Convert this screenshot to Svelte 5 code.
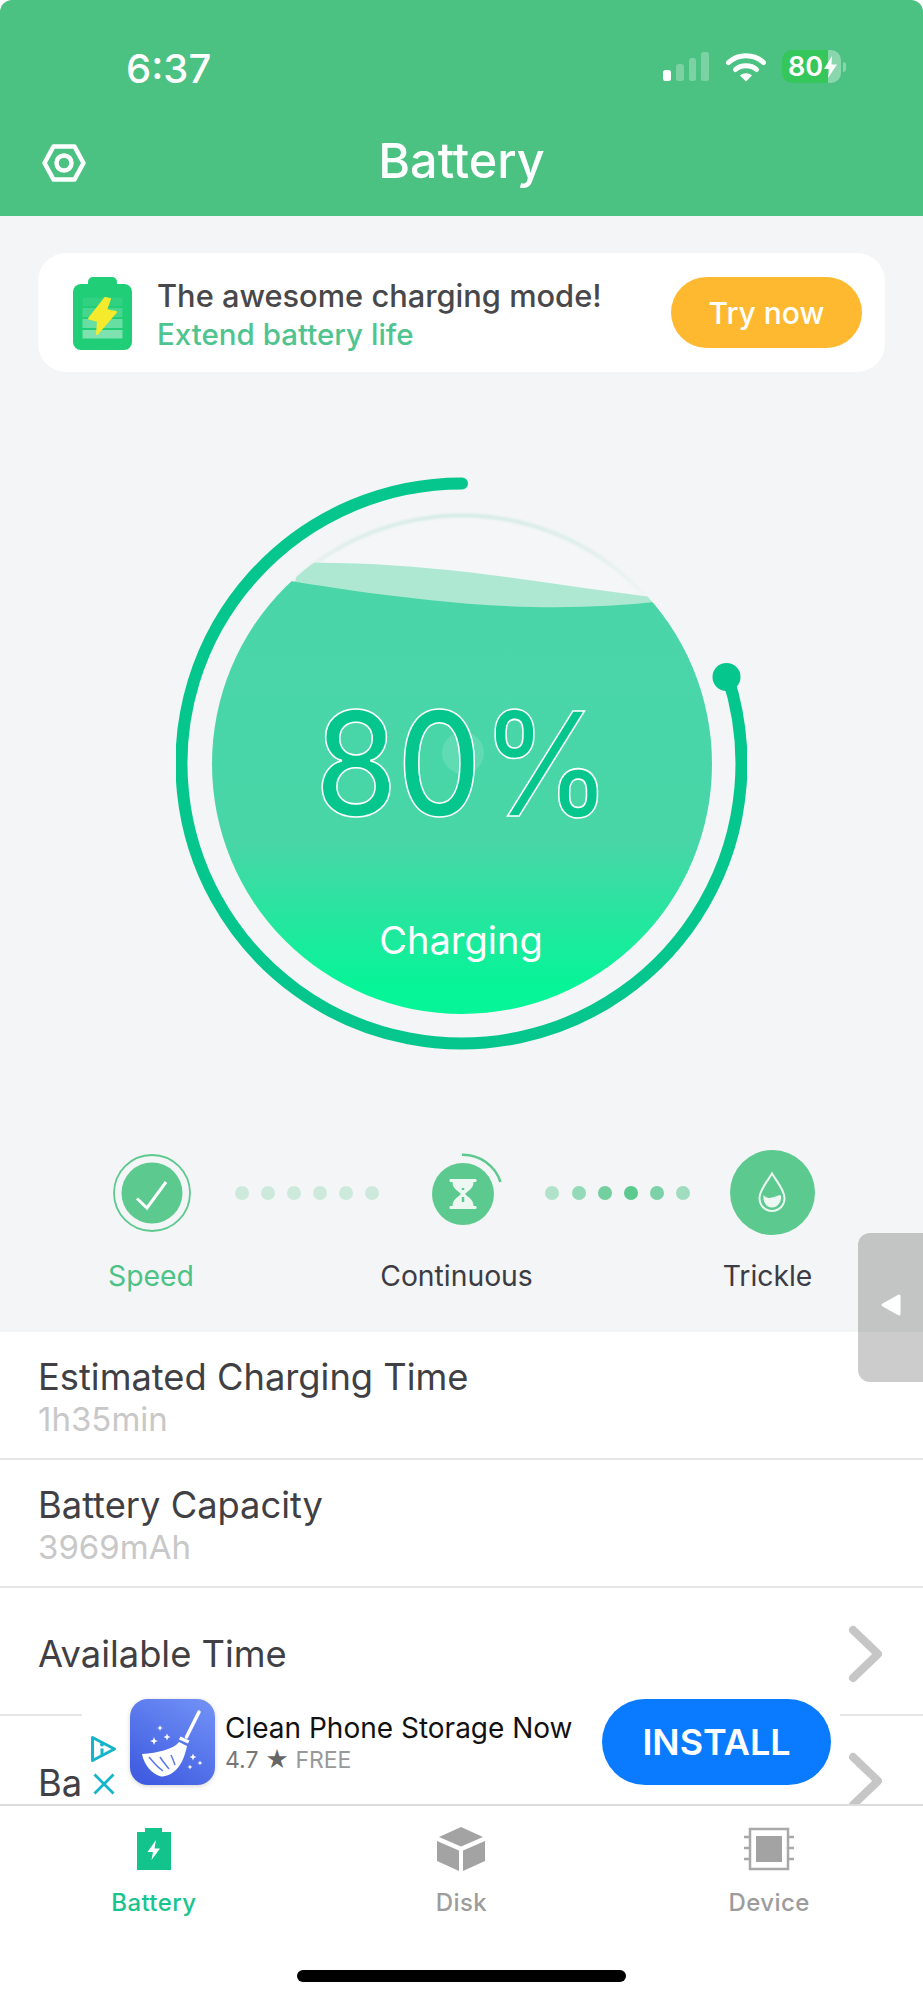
<script>
  const firstDots = [0, 1, 2, 3, 4, 5];
  const secondDots = ['#b0e2c9', '#94d9b8', '#74cf9f', '#5cc98f', '#7cd1a7', '#a0dcc0'];
  const stars = [
    [30, 29, 3], [24, 42, 4], [37, 38, 3.5], [63, 58, 3.5], [70, 64, 2.5], [60, 68, 2.5]
  ];
  const star = (x, y, r) =>
    `M${x} ${y - r}L${x + r * 0.28} ${y - r * 0.28}L${x + r} ${y}L${x + r * 0.28} ${y + r * 0.28}L${x} ${y + r}L${x - r * 0.28} ${y + r * 0.28}L${x - r} ${y}L${x - r * 0.28} ${y - r * 0.28}Z`;
</script>

<div class="page">
  <header class="header">
    <div class="status">
      <span class="time">6:37</span>
      <div class="status-icons">
        <div class="signal">
          <i class="b1"></i><i class="b2"></i><i class="b3"></i><i class="b4"></i>
        </div>
        <svg class="wifi" viewBox="0 0 40 30" width="40" height="30">
          <path d="M2.500 10.500C12 1.500 28 1.500 37.500 10.500" fill="none" stroke="#fff" stroke-width="5" stroke-linecap="round"/>
          <path d="M9.500 17.500C15 12.500 25 12.500 30.500 17.500" fill="none" stroke="#fff" stroke-width="5" stroke-linecap="round"/>
          <path d="M14 23.500C17.500 20.500 22.500 20.500 26 23.500L20 29.500Z" fill="#fff"/>
        </svg>
        <div class="batt">
          <div class="batt-body">
            <span>80</span>
            <svg viewBox="0 0 13 22" width="13" height="22"><path d="M8 0L0 13H5.500L4 22L13 8.500H7.500Z" fill="#fff"/></svg>
          </div>
          <i class="batt-nub"></i>
        </div>
      </div>
    </div>
    <div class="nav">
      <svg class="gear" viewBox="0 0 44 38" width="44" height="38">
        <path d="M11.500 2.500H32.500L41.500 19L32.500 35.500H11.500L2.500 19Z" fill="none" stroke="#fff" stroke-width="4.500" stroke-linejoin="round"/>
        <circle cx="22" cy="19" r="7.500" fill="none" stroke="#fff" stroke-width="4.500"/>
      </svg>
      <h1>Battery</h1>
    </div>
  </header>

  <main class="hero">
    <section class="promo">
      <svg class="promo-icon" viewBox="73 276 59 73" width="59" height="73">
        <path d="M88 284V281a5 5 0 0 1 5-5h19a5 5 0 0 1 5 5v3Z" fill="#1fce76"/>
        <rect x="73" y="283" width="59" height="66" rx="8" fill="#1fce76"/>
        <rect x="82.500" y="296.500" width="40" height="8.500" fill="#fff" opacity=".08"/>
        <rect x="82.500" y="307" width="40" height="9" fill="#fff" opacity=".18"/>
        <rect x="82.500" y="318" width="40" height="9" fill="#fff" opacity=".32"/>
        <rect x="82.500" y="329" width="40" height="8.500" fill="#fff" opacity=".42"/>
        <path d="M105 297L89 317.500L98 320L97 333L116 311L106 309L110 298Z" fill="#f6ea2c" stroke="#f6ea2c" stroke-width="2" stroke-linejoin="round"/>
      </svg>
      <div class="promo-text">
        <div class="promo-title">The awesome charging mode!</div>
        <div class="promo-sub">Extend battery life</div>
      </div>
      <button class="try">Try now</button>
    </section>

    <svg class="gauge" viewBox="176 477 571 573" width="571" height="573">
      <defs>
        <linearGradient id="water" gradientUnits="userSpaceOnUse" x1="0" y1="514" x2="0" y2="1014">
          <stop offset="0" stop-color="#4bd5a8"/>
          <stop offset=".66" stop-color="#48d6a7"/>
          <stop offset=".95" stop-color="#05f598"/>
          <stop offset="1" stop-color="#05f598"/>
        </linearGradient>
        <linearGradient id="rim" gradientUnits="userSpaceOnUse" x1="0" y1="514" x2="0" y2="600">
          <stop offset="0" stop-color="#d6ece5"/>
          <stop offset="1" stop-color="#f1f5f5"/>
        </linearGradient>
        <filter id="soft" x="-5%" y="-5%" width="110%" height="110%"><feGaussianBlur stdDeviation="1.200"/></filter>
        <clipPath id="disc"><circle cx="462" cy="764" r="250"/></clipPath>
      </defs>
      <circle cx="462" cy="764" r="248.500" fill="#f4f6f7" stroke="url(#rim)" stroke-width="4" filter="url(#soft)"/>
      <g clip-path="url(#disc)">
        <path d="M300 563C360 562 410 566 471 572.500C540 581 600 591 660 598V640H280Z" fill="#aee8d3"/>
        <path d="M280 579C330 588 400 598 471 604C540 609 600 608 660 601.500C680 600 700 598 720 594V1020H200V579Z" fill="url(#water)"/>
      </g>
      <path d="M462 483.500A280 280 0 1 0 727.600 676.500" fill="none" stroke="#05c68c" stroke-width="12" stroke-linecap="round"/>
      <circle cx="726.500" cy="677" r="14" fill="#05c68c"/>
      <circle cx="463" cy="753" r="21" fill="#fff" opacity=".13"/>
      <text class="pct" transform="translate(463 816) scale(.9 1)">80%</text>
      <text class="chg" x="461" y="954">Charging</text>
    </svg>

    <div class="steps">
      <div class="step speed">
        <svg viewBox="0 0 78 78" width="78" height="78">
          <circle cx="39" cy="39" r="38" fill="none" stroke="#5cc98f" stroke-width="1.800"/>
          <circle cx="39" cy="39" r="30.500" fill="#5cc98f"/>
          <path d="M24 44.500L34 54L53 28" fill="none" stroke="#fff" stroke-width="3"/>
        </svg>
      </div>
      <div class="dots d1">
        {#each firstDots as d (d)}<i></i>{/each}
      </div>
      <div class="step cont">
        <svg viewBox="421.5 1150 82 82" width="82" height="82">
          <circle cx="461.500" cy="1192" r="31" fill="#5cc98f"/>
          <path d="M460.500 1152.700A39.500 39.500 0 0 1 499 1180" fill="none" stroke="#5cc98f" stroke-width="2.500"/>
          <rect x="448" y="1177" width="27" height="3" rx="1" fill="#eef8f3"/>
          <rect x="448" y="1204" width="27" height="3" rx="1" fill="#eef8f3"/>
          <path d="M451 1180H472C472 1187 466 1189 463.500 1192C466 1195 472 1197 472 1204H451C451 1197 457 1195 459.500 1192C457 1189 451 1187 451 1180Z" fill="#eef8f3"/>
          <path d="M461.500 1186V1188M461.500 1195V1200" stroke="#5cc98f" stroke-width="2.500"/>
        </svg>
      </div>
      <div class="dots d2">
        {#each secondDots as c (c)}<i style="background:{c}"></i>{/each}
      </div>
      <div class="step trickle">
        <svg viewBox="729 1150 85 85" width="85" height="85">
          <circle cx="771.500" cy="1192.500" r="42.500" fill="#5cc98f"/>
          <path d="M771 1173.500C776 1182 783.500 1190 783.500 1198C783.500 1205.500 778 1211 771 1211C764 1211 758.500 1205.500 758.500 1198C758.500 1190 766 1182 771 1173.500Z" fill="none" stroke="#eef8f3" stroke-width="2"/>
          <path d="M762.500 1195C766 1199 770 1198 773 1197C776 1196 778 1194.500 780 1195.500C781 1201 777 1207.500 771 1207.500C765 1207.500 761.500 1201 762.500 1195Z" fill="#eef8f3"/>
        </svg>
      </div>
    </div>

    <div class="labels">
      <span class="l-speed">Speed</span>
      <span class="l-cont">Continuous</span>
      <span class="l-trickle">Trickle</span>
    </div>
  </main>

  <section class="list">
    <div class="row two">
      <div class="row-title">Estimated Charging Time</div>
      <div class="row-sub">1h35min</div>
    </div>
    <div class="row two">
      <div class="row-title">Battery Capacity</div>
      <div class="row-sub">3969mAh</div>
    </div>
    <div class="row one">
      <div class="row-title">Available Time</div>
      <svg class="chev" viewBox="0 0 36 58" width="36" height="58"><path d="M5 5L30 29L5 53" fill="none" stroke="#c6c6c6" stroke-width="8" stroke-linecap="round" stroke-linejoin="round"/></svg>
    </div>
    <div class="row last">
      <div class="row-title">Ba</div>
      <svg class="chev chev2" viewBox="0 0 36 58" width="36" height="58"><path d="M5 5L30 29L5 53" fill="none" stroke="#c6c6c6" stroke-width="8" stroke-linecap="round" stroke-linejoin="round"/></svg>
    </div>
  </section>

  <nav class="tabs">
    <div class="tab active">
      <svg viewBox="0 0 36 44" width="36" height="44">
        <path d="M9 1h17v4h9v38H1V5h8Z" fill="#12c48c"/>
        <path d="M20 13L11.500 25H17L15.500 33L24 21.500H18.500Z" fill="#fff"/>
      </svg>
      <span>Battery</span>
    </div>
    <div class="tab">
      <svg viewBox="0 0 48 44" width="48" height="44">
        <path d="M24 0L46 10L24 19.500L2 10Z" fill="#a3a3a3"/>
        <path d="M0 14L22 23.500V44L0 34Z" fill="#a3a3a3"/>
        <path d="M48 14L26 23.500V44L48 34Z" fill="#a3a3a3"/>
      </svg>
      <span>Disk</span>
    </div>
    <div class="tab">
      <svg viewBox="0 0 50 44" width="50" height="44">
        <rect x="6" y="2" width="38" height="40" fill="none" stroke="#a9a9a9" stroke-width="2.500"/>
        <rect x="12" y="8" width="26" height="26" transform="translate(0 1)" fill="#a3a3a3"/>
        <path d="M0 10H5M0 21H5M0 32H5M45 10H50M45 21H50M45 32H50" stroke="#a9a9a9" stroke-width="2.500"/>
      </svg>
      <span>Device</span>
    </div>
  </nav>

  <div class="home-wrap"><div class="home"></div></div>

  <aside class="side-tab">
    <svg viewBox="0 0 22 24" width="22" height="24"><path d="M19 3L3 12L19 21Z" fill="#fff" stroke="#fff" stroke-width="3" stroke-linejoin="round"/></svg>
  </aside>

  <aside class="ad">
    <div class="ad-marks">
      <svg viewBox="0 0 27 28" width="27" height="28">
        <path d="M2.500 2.500L24.500 14L2.500 25.500Z" fill="none" stroke="#14b5c9" stroke-width="3" stroke-linejoin="round"/>
        <circle cx="12" cy="9.500" r="2" fill="#14b5c9"/>
        <path d="M12 13.500V20" stroke="#14b5c9" stroke-width="3"/>
      </svg>
      <svg viewBox="0 0 22 22" width="22" height="22">
        <path d="M1.500 1.500L20.500 20.500M20.500 1.500L1.500 20.500" stroke="#14b5c9" stroke-width="2.800"/>
      </svg>
    </div>
    <svg class="ad-icon" viewBox="0 0 85 86" width="85" height="86">
      <defs>
        <linearGradient id="appTile" x1=".8" y1="0" x2=".2" y2="1">
          <stop offset="0" stop-color="#6f8ff5"/>
          <stop offset="1" stop-color="#3f5be0"/>
        </linearGradient>
      </defs>
      <rect width="85" height="86" rx="18" fill="url(#appTile)"/>
      <path d="M69 13L56.500 38" stroke="#fff" stroke-width="3.500" stroke-linecap="round"/>
      <path d="M50.500 37.500L59.500 41.500L58 44.500L49 40.500Z" fill="#fff"/>
      <path d="M49 43C44 50 28 54 12 55C14 66 22 75 31 77.500C42 77.500 53 68 57 47Z" fill="#fff"/>
      <path d="M19 58C24 64 27 68 33 72M30 58C33 63 36 66 39 70M41 56C43 60 44 63 45 66" fill="none" stroke="#5a78ea" stroke-width="1.500"/>
      {#each stars as s, i (i)}<path d={star(s[0], s[1], s[2])} fill="#fff"/>{/each}
    </svg>
    <div class="ad-text">
      <div class="ad-title">Clean Phone Storage Now</div>
      <div class="ad-sub"><span class="rate">4.7</span> <span class="star">★</span> <span class="free">FREE</span></div>
    </div>
    <button class="install">INSTALL</button>
  </aside>
</div>

<style>
  :global(body) {
    margin: 0;
    background: #fff;
  }
  .page {
    position: relative;
    width: 923px;
    height: 2000px;
    overflow: hidden;
    display: flex;
    flex-direction: column;
    background: #fff;
    font-family: Inter, "Liberation Sans", sans-serif;
  }
  .header {
    height: 216px;
    background: #4bc182;
    border-radius: 12px 12px 0 0;
    color: #fff;
    display: flex;
    flex-direction: column;
    flex: none;
  }
  .status {
    height: 133px;
    padding: 47px 77px 0 126px;
    box-sizing: border-box;
    display: flex;
    justify-content: space-between;
    align-items: flex-start;
  }
  .time {
    font-size: 40px;
    line-height: 44px;
    font-weight: 500;
    width: 84px;
  }
  .status-icons {
    display: flex;
    align-items: flex-start;
    margin-top: 5px;
  }
  .signal {
    display: flex;
    align-items: flex-end;
    gap: 5px;
    height: 29px;
    width: 46px;
  }
  .signal i {
    display: block;
    width: 8px;
    border-radius: 2.5px;
    background: rgba(255, 255, 255, 0.28);
  }
  .signal .b1 { height: 11px; background: #fff; }
  .signal .b2 { height: 17px; }
  .signal .b3 { height: 23px; }
  .signal .b4 { height: 29px; }
  .wifi {
    margin-left: 17px;
  }
  .batt {
    margin-left: 16px;
    margin-top: -2px;
    display: flex;
    align-items: center;
  }
  .batt-body {
    width: 59px;
    height: 33px;
    border-radius: 10px;
    background: linear-gradient(90deg, #35c65c 78%, rgba(255, 255, 255, 0.35) 78%);
    display: flex;
    align-items: center;
    padding-left: 6px;
    box-sizing: border-box;
    gap: 1px;
    font-size: 27px;
    font-weight: 600;
    line-height: 33px;
    color: #fff;
  }
  .batt-nub {
    width: 3px;
    height: 10px;
    margin-left: 2px;
    border-radius: 0 3px 3px 0;
    background: rgba(255, 255, 255, 0.35);
  }
  .nav {
    position: relative;
    height: 56px;
    display: flex;
    align-items: center;
    justify-content: center;
  }
  .gear {
    position: absolute;
    left: 42px;
    top: 11px;
  }
  .nav h1 {
    margin: 0;
    font-size: 48.5px;
    line-height: 56px;
    font-weight: 500;
  }
  .hero {
    flex: none;
    height: 1116px;
    background: #f4f5f6;
    display: flex;
    flex-direction: column;
    box-sizing: border-box;
    padding-top: 37px;
  }
  .promo {
    margin: 0 38px;
    height: 119px;
    flex: none;
    box-sizing: border-box;
    background: #fff;
    border-radius: 28px;
    display: flex;
    align-items: center;
    padding: 0 23px 0 35px;
  }
  .promo-icon {
    flex: none;
    margin-top: 2px;
  }
  .promo-text {
    margin-left: 25px;
    padding-top: 5px;
    flex: 1;
  }
  .promo-title {
    font-size: 30.8px;
    line-height: 38px;
    font-weight: 500;
    color: #48484a;
    white-space: nowrap;
  }
  .promo-sub {
    font-size: 29.5px;
    line-height: 39px;
    font-weight: 500;
    color: #50c490;
    white-space: nowrap;
  }
  .try {
    width: 191px;
    height: 71px;
    border: 0;
    border-radius: 36px;
    background: #ffb930;
    color: #fff;
    font: 500 30px Inter, "Liberation Sans", sans-serif;
    padding: 0;
  }
  .gauge {
    display: block;
    margin: 105px 0 0 176px;
    flex: none;
  }
  .pct {
    font-size: 145px;
    font-weight: 500;
    text-anchor: middle;
    fill: #05c68c;
    stroke: #fff;
    stroke-width: 1.6px;
  }
  .chg {
    font-size: 38px;
    text-anchor: middle;
    fill: #fff;
  }
  .steps {
    margin-top: 100px;
    height: 85px;
    display: flex;
    align-items: center;
    padding-left: 113px;
    flex: none;
  }
  .step {
    flex: none;
    display: flex;
  }
  .step svg { display: block; }
  .dots {
    display: flex;
    gap: 12.2px;
    flex: none;
  }
  .dots i {
    display: block;
    width: 14px;
    height: 14px;
    border-radius: 50%;
    background: #cde9dc;
  }
  .d1 { margin-left: 43.5px; margin-right: 43.5px; }
  .d2 { margin-left: 40.5px; margin-right: 40px; }
  .labels {
    display: flex;
    margin-top: 24px;
    margin-left: 51px;
    font-size: 28.3px;
    line-height: 34px;
    color: #3c3c44;
  }
  .labels span { display: block; text-align: center; flex: none; }
  .l-speed { width: 200px; color: #4cc287; }
  .l-cont { width: 411px; }
  .l-trickle { width: 211px; }
  .list {
    flex: none;
    height: 472px;
    background: #fff;
    display: flex;
    flex-direction: column;
  }
  .row {
    box-sizing: border-box;
    padding-left: 38px;
    position: relative;
    flex: none;
  }
  .two {
    height: 128px;
    padding-top: 24px;
    border-bottom: 2px solid #e6e6e6;
  }
  .one {
    height: 128px;
    border-bottom: 2px solid #e6e6e6;
    display: flex;
    align-items: center;
    padding-top: 6px;
  }
  .last {
    height: 88px;
    overflow: hidden;
    padding-top: 46px;
  }
  .row-title {
    font-size: 36.3px;
    line-height: 42px;
    color: #404044;
    white-space: nowrap;
  }
  .row-sub {
    font-size: 33px;
    line-height: 42px;
    color: #c8c8c8;
  }
  .chev {
    position: absolute;
    right: 39px;
    top: 37px;
  }
  .chev2 {
    top: 36px;
  }
  .tabs {
    flex: none;
    height: 150px;
    border-top: 2px solid #dcdcdc;
    box-sizing: border-box;
    display: grid;
    grid-template-columns: repeat(3, 1fr);
    padding-top: 21px;
    background: #fff;
  }
  .tab {
    display: flex;
    flex-direction: column;
    align-items: center;
    color: #9c9c9c;
    font-size: 24px;
    font-weight: 500;
    line-height: 30px;
    letter-spacing: 0.4px;
  }
  .tab svg {
    display: block;
    margin-bottom: 17px;
  }
  .tab.active {
    color: #19c48e;
  }
  .home-wrap {
    flex: 1;
    display: flex;
    justify-content: center;
    padding-top: 16px;
  }
  .home {
    width: 329px;
    height: 12px;
    border-radius: 6px;
    background: #000;
  }
  .side-tab {
    position: absolute;
    left: 858px;
    top: 1233px;
    width: 65px;
    height: 149px;
    border-radius: 12px 0 0 12px;
    background: rgba(0, 0, 0, 0.2);
  }
  .side-tab svg {
    position: absolute;
    left: 22px;
    top: 60px;
  }
  .ad {
    position: absolute;
    left: 82px;
    top: 1690px;
    width: 758px;
    height: 114px;
    background: #fff;
    display: flex;
    align-items: flex-start;
    box-sizing: border-box;
    padding-top: 9px;
  }
  .ad-marks {
    width: 48px;
    padding: 36px 0 0 8px;
    box-sizing: border-box;
    display: flex;
    flex-direction: column;
    gap: 10px;
    flex: none;
  }
  .ad-marks svg { display: block; }
  .ad-marks svg + svg { margin-left: 3px; }
  .ad-icon {
    flex: none;
    filter: drop-shadow(0 1px 2px rgba(0, 0, 0, 0.18));
  }
  .ad-text {
    margin-left: 10px;
    width: 377px;
    flex: none;
    padding-top: 12px;
  }
  .ad-title {
    font-size: 28px;
    line-height: 35px;
    color: #111;
    white-space: nowrap;
  }
  .ad-sub {
    font-size: 23px;
    line-height: 29px;
    color: #777;
    white-space: nowrap;
  }
  .ad-sub .star { color: #666; }
  .ad-sub .free { color: #999; }
  .install {
    width: 229px;
    height: 86px;
    border: 0;
    border-radius: 43px;
    background: #0a7aff;
    color: #fff;
    font: 600 36px Inter, "Liberation Sans", sans-serif;
    padding: 0;
    flex: none;
  }
</style>
